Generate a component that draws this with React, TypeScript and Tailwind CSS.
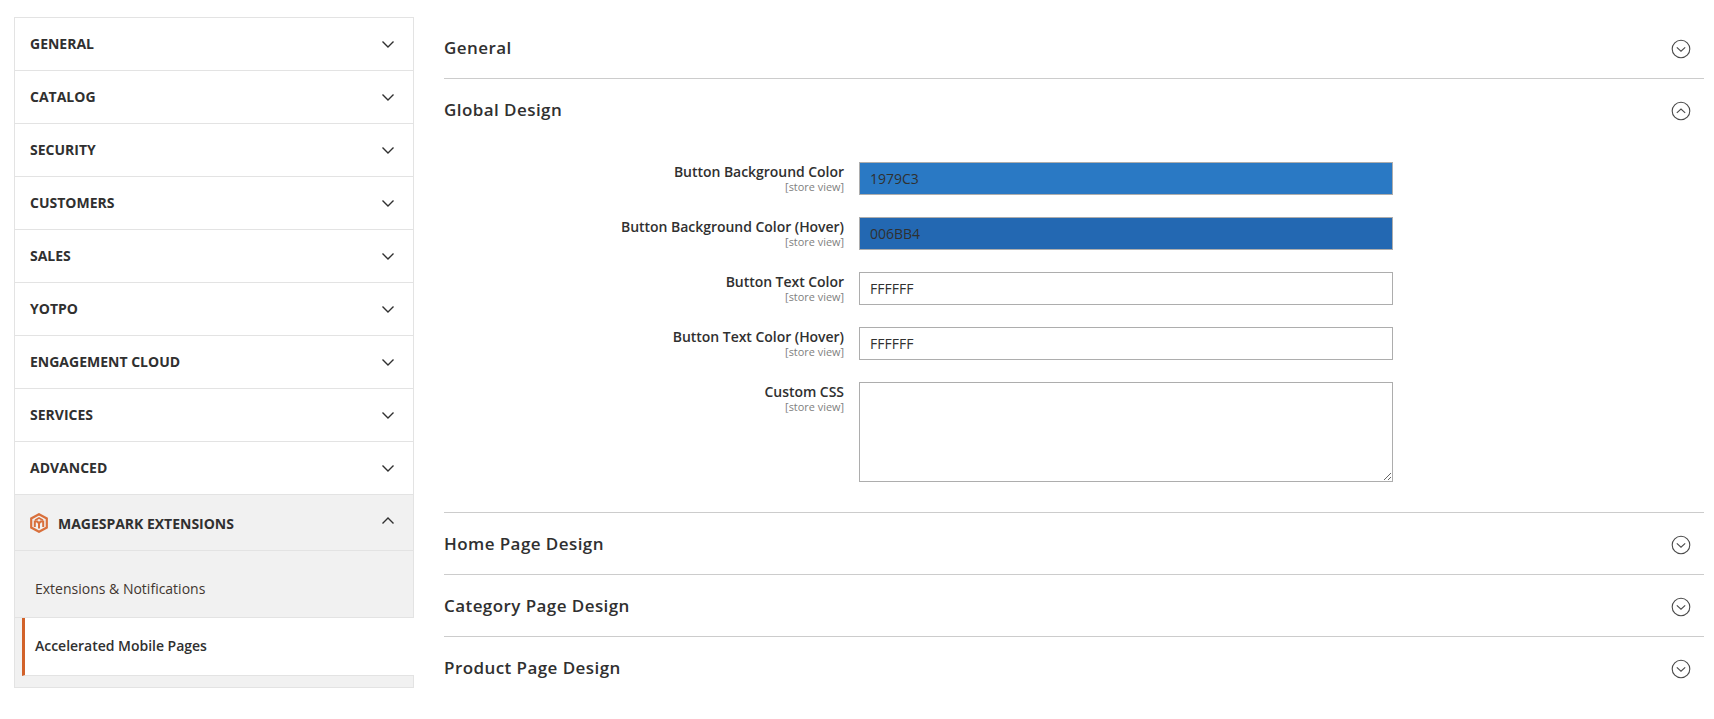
import { useState } from "react";

const menuItems = [
  "GENERAL",
  "CATALOG",
  "SECURITY",
  "CUSTOMERS",
  "SALES",
  "YOTPO",
  "ENGAGEMENT CLOUD",
  "SERVICES",
  "ADVANCED",
];

const fields = [
  { label: "Button Background Color", value: "1979C3", bg: "bg-[#2a79c4]" },
  { label: "Button Background Color (Hover)", value: "006BB4", bg: "bg-[#2368b2]" },
  { label: "Button Text Color", value: "FFFFFF", bg: "bg-white" },
  { label: "Button Text Color (Hover)", value: "FFFFFF", bg: "bg-white" },
];

function Chevron({ up = false }: { up?: boolean }) {
  return (
    <svg width="14" height="9" viewBox="0 0 14 9" fill="none" className={up ? "mb-[5px]" : ""}>
      <path
        d={up ? "M1.500 7.500 7 2l5.500 5.500" : "M1.500 1.500 7 7l5.500-5.500"}
        stroke="#303030"
        strokeWidth="1.400"
      />
    </svg>
  );
}

function CircleChevron({ up = false }: { up?: boolean }) {
  return (
    <svg width="20" height="20" viewBox="0 0 20 20" fill="none">
      <circle cx="10" cy="10" r="8.800" stroke="#4a4a4a" strokeWidth="1.100" />
      <path
        d={up ? "M5.800 11.800 10 8l4.200 3.800" : "M5.800 8.400 10 12.200l4.200-3.800"}
        stroke="#4a4a4a"
        strokeWidth="1.100"
      />
    </svg>
  );
}

function MagesparkLogo() {
  return (
    <svg width="18" height="20" viewBox="0 0 18 20" fill="none" stroke="#d9703c" strokeWidth="2.200">
      <path d="M9 1.200 16.800 5.500v9L9 18.800 1.200 14.500v-9z" />
      <path d="M5 7.200 9 5l4 2.200" strokeWidth="1.600" />
      <path d="M4.800 14V8.600h2.600L9 10.400l1.600-1.800h2.600V14" strokeWidth="2" />
      <path d="M9 10v5.500" strokeWidth="2" />
    </svg>
  );
}

function SectionHeader({ title, open = false }: { title: string; open?: boolean }) {
  return (
    <div className="flex h-[61px] items-center justify-between">
      <h2 className="text-[17px] font-semibold tracking-[0.43px] text-[#303030]">{title}</h2>
      <span className="mr-[13px] mt-[2px]">
        <CircleChevron up={open} />
      </span>
    </div>
  );
}

function FieldLabel({ label }: { label: string }) {
  return (
    <div className="w-[400px] text-right">
      <div className="text-[14px] font-semibold leading-[19px] tracking-[-0.04px]">{label}</div>
      <div className="text-[10.9px] leading-[12px] text-[#808080]">[store view]</div>
    </div>
  );
}

export default function App() {
  const [css, setCss] = useState("");

  return (
    <div className="flex h-[719px] w-[1714px] overflow-hidden bg-white pl-[14px] pt-[17px] font-['Open_Sans',sans-serif] text-[#303030]">
      <aside className="h-[671px] w-[400px] shrink-0 border-x border-b border-[#e3e3e3]">
        <div className="border-t border-[#e3e3e3]">
          {menuItems.map((item) => (
            <div
              key={item}
              className="flex h-[53px] items-center justify-between border-b border-[#e3e3e3] pl-[15px] pr-[18px]"
            >
              <span className="pb-[2px] text-[14px] font-bold">{item}</span>
              <Chevron />
            </div>
          ))}
        </div>
        <div className="h-[192px] bg-[#f1f1f1]">
          <div className="flex h-[56px] items-center justify-between border-b border-[#e3e3e3] pl-[15px] pr-[18px]">
            <span className="flex items-center gap-[10px] text-[14px] font-bold tracking-[-0.02px]">
              <MagesparkLogo />
              <span className="pt-[2px]">MAGESPARK EXTENSIONS</span>
            </span>
            <Chevron up />
          </div>
          <div className="flex h-[67px] items-center border-b border-[#e3e3e3] pl-[20px] pt-[8px] text-[14px] text-[#41362f]">
            Extensions &amp; Notifications
          </div>
          <div className="-mr-px ml-[7px] flex h-[58px] items-center border-b border-l-[3px] border-[#e3e3e3] border-l-[#d2622a] bg-white pb-[2px] pl-[10px] text-[14px] font-semibold tracking-[-0.02px]">
            Accelerated Mobile Pages
          </div>
        </div>
      </aside>

      <main className="ml-[30px] w-[1260px] shrink-0">
        <section className="border-b border-[#cccccc]">
          <SectionHeader title="General" />
        </section>

        <section className="border-b border-[#cccccc] pb-[30px]">
          <SectionHeader title="Global Design" open />
          <div className="flex flex-col gap-[22px] pt-[22px]">
            {fields.map((field) => (
              <div key={field.label} className="flex h-[33px] gap-[15px]">
                <FieldLabel label={field.label} />
                <input
                  defaultValue={field.value}
                  className={`h-[33px] w-[534px] border border-[#adadad] px-[10px] text-[14px] text-[#303030] outline-none ${field.bg}`}
                />
              </div>
            ))}
            <div className="flex gap-[15px]">
              <FieldLabel label="Custom CSS" />
              <textarea
                value={css}
                onChange={(e) => setCss(e.target.value)}
                className="block h-[100px] w-[534px] border border-[#adadad] bg-white outline-none"
              />
            </div>
          </div>
        </section>

        <section className="border-b border-[#cccccc]">
          <SectionHeader title="Home Page Design" />
        </section>
        <section className="border-b border-[#cccccc]">
          <SectionHeader title="Category Page Design" />
        </section>
        <section>
          <SectionHeader title="Product Page Design" />
        </section>
      </main>
    </div>
  );
}
